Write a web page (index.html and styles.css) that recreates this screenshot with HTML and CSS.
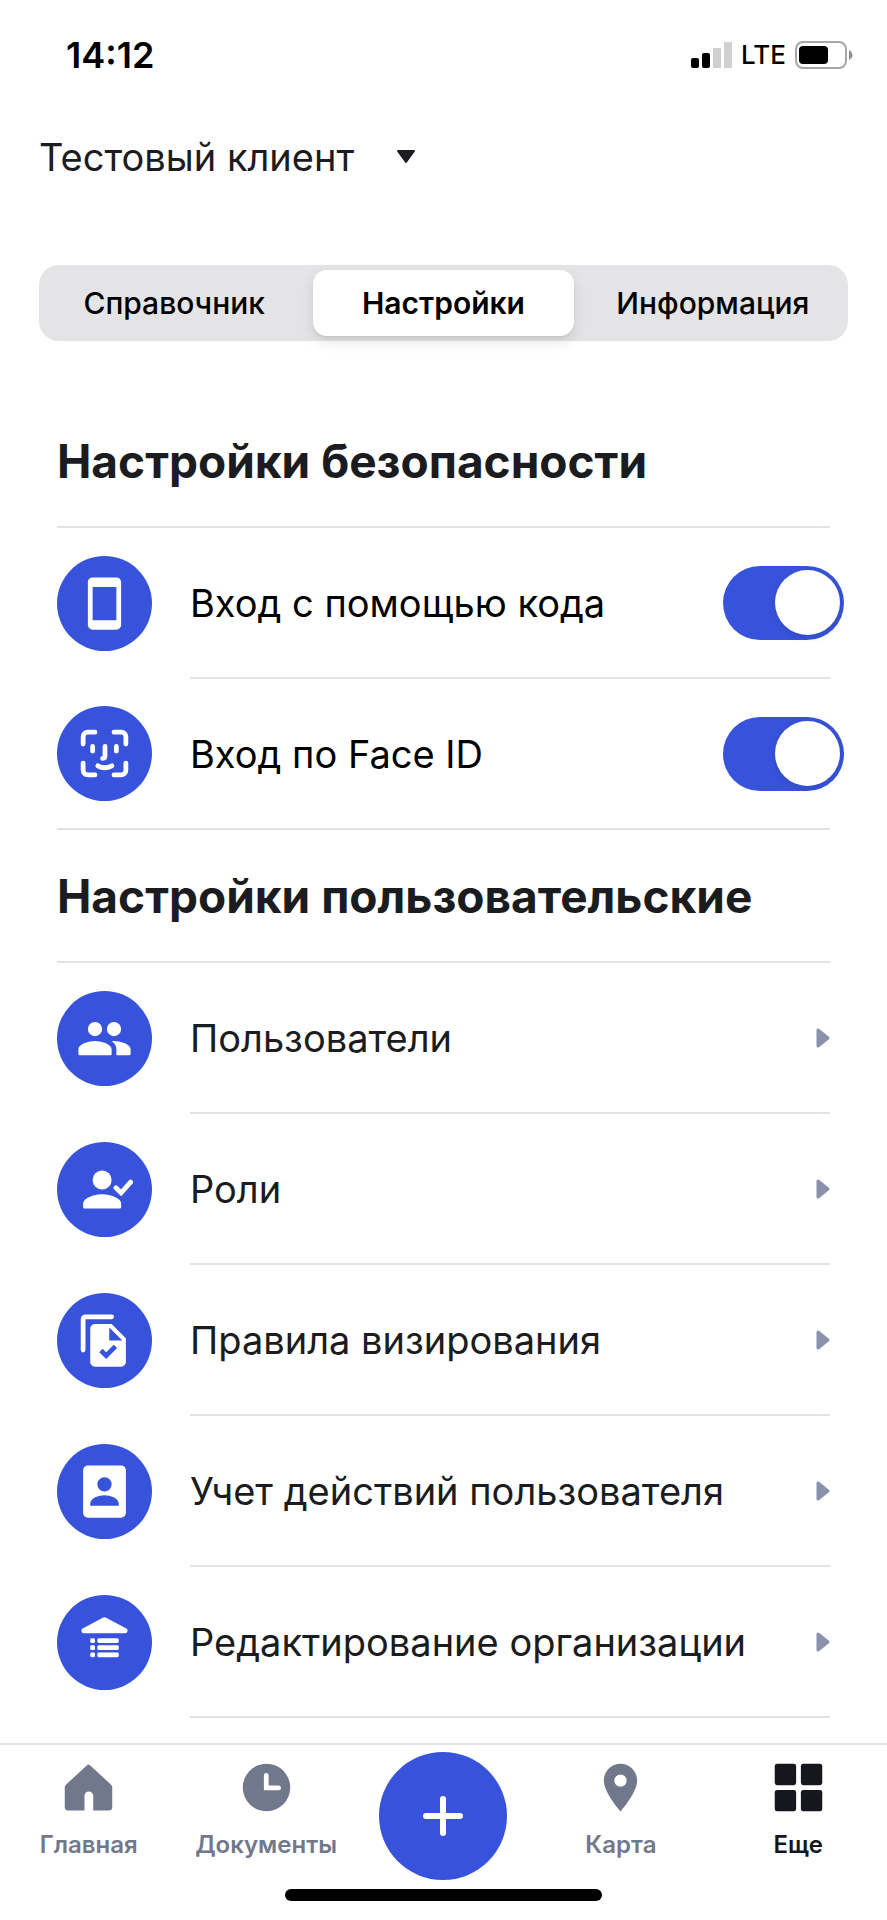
FILE: index.html
```html
<!DOCTYPE html>
<html lang="ru">
<head>
<meta charset="utf-8">
<meta name="viewport" content="width=device-width, initial-scale=1">
<title>Настройки</title>
<link rel="stylesheet" href="styles.css">
</head>
<body>
<div class="status">
  <time class="status-time">14:12</time>
  <div class="status-right">
    <svg class="signal" viewBox="0 0 41 26" aria-hidden="true">
      <rect x="0" y="16" width="8" height="10" rx="2"/><rect x="11" y="11" width="8" height="15" rx="2"/>
      <rect class="dim" x="22" y="6" width="8" height="20" rx="1"/><rect class="dim" x="33" y="0" width="8" height="26" rx="1"/>
    </svg>
    <span class="network">LTE</span>
    <svg class="battery" viewBox="0 0 58 28" aria-hidden="true">
      <rect class="shell" x="1" y="1" width="50" height="26" rx="7"/>
      <rect x="4" y="5" width="29" height="18" rx="4"/>
      <path class="tip" d="M54 9c2 1 3.500 3 3.500 5s-1.500 4-3.500 5z"/>
    </svg>
  </div>
</div>

<header class="client">
  <button class="client-button" type="button">Тестовый клиент
    <svg class="caret" viewBox="0 0 20 14" aria-hidden="true"><path d="M2 1h16L10 12z"/></svg>
  </button>
</header>

<nav class="tabs" aria-label="Разделы">
  <button class="tab" type="button">Справочник</button>
  <button class="tab tab-active" type="button" aria-current="page">Настройки</button>
  <button class="tab" type="button">Информация</button>
</nav>

<main class="content">
  <section>
    <h2 class="heading">Настройки безопасности</h2>
    <ul class="list list-closed">
      <li class="row">
        <span class="badge"><svg class="icon" viewBox="0 0 24 24" aria-hidden="true"><path fill-rule="evenodd" d="M7 1h10a2 2 0 0 1 2 2v18a2 2 0 0 1-2 2H7a2 2 0 0 1-2-2V3a2 2 0 0 1 2-2zM7 5v14h10V5z"/></svg></span>
        <label class="row-body" for="code"><span>Вход с помощью кода</span>
          <input class="switch" id="code" type="checkbox" role="switch" checked></label>
      </li>
      <li class="row">
        <span class="badge"><svg class="icon line" viewBox="0 0 24 24" aria-hidden="true"><path d="M3 8V5a2 2 0 0 1 2-2h3M16 3h3a2 2 0 0 1 2 2v3M21 16v3a2 2 0 0 1-2 2h-3M8 21H5a2 2 0 0 1-2-2v-3M7 9v2M17 9v2M12.200 9v4.200q0 .8-1 .9M9.200 17.200q2.800 1.600 5.900 0"/></svg></span>
        <label class="row-body" for="face"><span>Вход по Face ID</span>
          <input class="switch" id="face" type="checkbox" role="switch" checked></label>
      </li>
    </ul>
  </section>

  <section>
    <h2 class="heading">Настройки пользовательские</h2>
    <ul class="list">
      <li class="row">
        <span class="badge"><svg class="icon" viewBox="0 0 24 24" aria-hidden="true"><circle cx="8" cy="8" r="3"/><circle cx="16" cy="8" r="3"/><path d="M8 13c-2.330 0-7 1.170-7 3.500V18.500q0 .5.5.5h13q.5 0 .5-.5V16.500C15 14.170 10.330 13 8 13zM16 13c-.29 0-.62.02-.97.05 1.160.84 1.970 1.970 1.970 3.450V19h5.500q.5 0 .5-.5v-2c0-2.330-4.670-3.500-7-3.500z"/></svg></span>
        <a class="row-body" href="#users"><span>Пользователи</span><svg class="arrow" viewBox="0 0 14 20" aria-hidden="true"><path d="M2 2v16l10-8z"/></svg></a>
      </li>
      <li class="row">
        <span class="badge"><svg class="icon" viewBox="0 0 24 24" aria-hidden="true"><circle cx="11" cy="8" r="4"/><path d="M11 14c-2.670 0-8 1.340-8 4v1.500q0 .5.5.5h15q.5 0 .5-.5V18c0-2.660-5.330-4-8-4z"/><path class="tick" d="M16.800 11.300l2.200 2.100 4-4.500"/></svg></span>
        <a class="row-body" href="#roles"><span>Роли</span><svg class="arrow" viewBox="0 0 14 20" aria-hidden="true"><path d="M2 2v16l10-8z"/></svg></a>
      </li>
      <li class="row">
        <span class="badge"><svg class="icon" viewBox="0 0 24 24" aria-hidden="true"><path d="M16 2a1 1 0 0 0-1-1H4a2 2 0 0 0-2 2v13a1 1 0 0 0 2 0V3h11a1 1 0 0 0 1-1z"/><path fill-rule="evenodd" d="M8 5h7l6 6v10a2 2 0 0 1-2 2H8a2 2 0 0 1-2-2V7a2 2 0 0 1 2-2zM14 6.500V12h5.500z"/><path class="tick tick-blue" d="M10.500 16.200l2.200 2.200 3.900-3.900"/></svg></span>
        <a class="row-body" href="#rules"><span>Правила визирования</span><svg class="arrow" viewBox="0 0 14 20" aria-hidden="true"><path d="M2 2v16l10-8z"/></svg></a>
      </li>
      <li class="row">
        <span class="badge"><svg class="icon" viewBox="0 0 24 24" aria-hidden="true"><path fill-rule="evenodd" d="M5 1h14a2 2 0 0 1 2 2v18a2 2 0 0 1-2 2H5a2 2 0 0 1-2-2V3a2 2 0 0 1 2-2zM12 6a3 3 0 1 0 0 6 3 3 0 0 0 0-6zM12 13.600c-2.400 0-6 1.200-6 3.500V18h12v-.9c0-2.300-3.600-3.500-6-3.500z"/></svg></span>
        <a class="row-body" href="#audit"><span>Учет действий пользователя</span><svg class="arrow" viewBox="0 0 14 20" aria-hidden="true"><path d="M2 2v16l10-8z"/></svg></a>
      </li>
      <li class="row">
        <span class="badge"><svg class="icon" viewBox="0 0 24 24" aria-hidden="true"><path d="M11.500 1.500q.5-.2 1 0l8.700 4.600a.9.9 0 0 1 .5.9v.2a.9.9 0 0 1-.9.9H3.200a.9.9 0 0 1-.9-.9V7a.9.9 0 0 1 .5-.9z"/><rect x="6" y="10.200" width="2" height="2" rx=".6"/><rect x="9" y="10.200" width="9" height="2" rx=".6"/><rect x="6" y="13.200" width="2" height="2" rx=".6"/><rect x="9" y="13.200" width="9" height="2" rx=".6"/><rect x="6" y="16.200" width="2" height="2" rx=".6"/><rect x="9" y="16.200" width="9" height="2" rx=".6"/></svg></span>
        <a class="row-body" href="#organization"><span>Редактирование организации</span><svg class="arrow" viewBox="0 0 14 20" aria-hidden="true"><path d="M2 2v16l10-8z"/></svg></a>
      </li>
    </ul>
  </section>
</main>

<footer class="bottom">
  <nav class="bar" aria-label="Главное меню">
    <a class="bar-item" href="#home"><svg class="icon" viewBox="0 0 24 24" aria-hidden="true"><path d="M12.500 2.500l9 8.300a1.500 1.500 0 0 1 .5 1.100v8.300a1.500 1.500 0 0 1-1.500 1.500H14v-6.200a1.850 1.850 0 0 0-3.700 0v6.200H3.500A1.500 1.500 0 0 1 2 20.200v-8.300a1.500 1.500 0 0 1 .5-1.100l9-8.300q.5-.4 1 0z"/></svg>Главная</a>
    <a class="bar-item" href="#documents"><svg class="icon" viewBox="0 0 24 24" aria-hidden="true"><circle cx="12" cy="12" r="10"/><path class="hands" d="M11.900 6.900v5.300h5.200"/></svg>Документы</a>
    <button class="add" type="button" aria-label="Добавить"><svg class="plus" viewBox="0 0 40 40" aria-hidden="true"><path d="M20 3v34M3 20h34"/></svg></button>
    <a class="bar-item" href="#map"><svg class="icon" viewBox="0 0 24 24" aria-hidden="true"><path fill-rule="evenodd" d="M12 2C8.130 2 5 5.130 5 9c0 5.250 7 13 7 13s7-7.750 7-13c0-3.870-3.130-7-7-7zM12 6.500a2.600 2.600 0 1 0 0 5.200 2.600 2.600 0 0 0 0-5.200z"/></svg>Карта</a>
    <a class="bar-item bar-item-active" href="#more" aria-current="page"><svg class="icon" viewBox="0 0 24 24" aria-hidden="true"><rect x="2" y="2" width="9" height="9" rx="1"/><rect x="13" y="2" width="9" height="9" rx="1"/><rect x="2" y="13" width="9" height="9" rx="1"/><rect x="13" y="13" width="9" height="9" rx="1"/></svg>Еще</a>
  </nav>
  <div class="home-indicator"></div>
</footer>
</body>
</html>
```
FILE: styles.css
```css
:root {
  --blue: #3853db;
  --ink: #1b1c20;
  --line: #e1e1e8;
  --muted: #71788b;
}

* { box-sizing: border-box; }

body {
  margin: 0;
  min-height: 100vh;
  display: flex;
  flex-direction: column;
  background: #fff;
  color: var(--ink);
  font-family: Inter, "Liberation Sans", sans-serif;
  font-size: 38px;
  line-height: 48px;
}

button { border: 0; padding: 0; background: none; color: inherit; font: inherit; }
a { color: inherit; text-decoration: none; }

.icon { width: 57px; height: 57px; fill: currentColor; }

/* Status bar */
.status {
  display: flex;
  align-items: center;
  justify-content: space-between;
  height: 110px;
  padding: 0 34px 0 66px;
  color: #000;
}
.status-time { font-size: 36px; font-weight: 600; }
.status-right { display: flex; align-items: center; gap: 9px; }
.network { font-size: 26px; font-weight: 500; }
.signal { width: 41px; height: 26px; }
.signal .dim { fill: #d0d0d0; }
.battery { width: 58px; height: 28px; }
.battery .shell { fill: none; stroke: #a6a6a6; stroke-width: 2; }
.battery .tip { fill: #8e8e8e; }

/* Client selector */
.client { padding: 23px 39px 0; }
.client-button { display: flex; align-items: center; gap: 42px; }
.caret { width: 20px; height: 14px; fill: var(--ink); stroke: var(--ink); stroke-width: 2; stroke-linejoin: round; }

/* Segmented tabs */
.tabs {
  display: grid;
  grid-template-columns: repeat(3, 1fr);
  gap: 9px;
  margin: 84px 39px 0;
  padding: 5px;
  border-radius: 20px;
  background: #e4e4e6;
}
.tab {
  height: 66px;
  border-radius: 14px;
  color: #000;
  font-size: 30px;
  font-weight: 500;
}
.tab-active {
  background: #fff;
  font-weight: 600;
  box-shadow: 0 6px 14px rgba(0, 0, 0, .1), 0 2px 3px rgba(0, 0, 0, .06);
}

/* Settings */
.content { flex: 1; padding: 54px 57px 25px; }
.heading {
  display: flex;
  align-items: center;
  height: 133px;
  margin: 0;
  border-bottom: 2px solid var(--line);
  font-size: 46px;
  font-weight: 700;
}
.list { margin: 0; padding: 0; list-style: none; }
.row { display: flex; align-items: center; gap: 38px; height: 151px; }
.badge {
  display: flex;
  align-items: center;
  justify-content: center;
  width: 95px;
  height: 95px;
  border-radius: 50%;
  background: var(--blue);
  color: #fff;
}
.line { fill: none; stroke: currentColor; stroke-width: 2; stroke-linecap: round; stroke-linejoin: round; }
.tick { fill: none; stroke: currentColor; stroke-width: 2; stroke-linecap: round; }
.tick-blue { stroke: var(--blue); stroke-linecap: butt; }
.row-body {
  display: flex;
  flex: 1;
  align-items: center;
  justify-content: space-between;
  height: 100%;
  border-bottom: 2px solid var(--line);
}
.list-closed { color: #000; }
.list-closed .row:last-child { border-bottom: 2px solid var(--line); }
.list-closed .row:last-child .row-body { border-bottom: 0; }
.arrow { width: 14px; height: 20px; fill: #8a92ab; stroke: #8a92ab; stroke-width: 3; stroke-linejoin: round; }

.switch {
  appearance: none;
  display: flex;
  align-items: center;
  width: 121px;
  height: 74px;
  margin: 0 -14px 0 0;
  padding: 0 4px;
  border-radius: 37px;
  background: #d5d7de;
}
.switch::before {
  content: "";
  width: 65px;
  height: 65px;
  border-radius: 50%;
  background: #fff;
  box-shadow: 0 2px 8px rgba(0, 0, 0, .12);
}
.switch:checked { justify-content: flex-end; background: var(--blue); }

/* Bottom bar */
.bottom { border-top: 2px solid var(--line); }
.bar { display: grid; grid-template-columns: repeat(5, 1fr); justify-items: center; height: 144px; padding-top: 7px; }
.bar-item {
  display: flex;
  flex-direction: column;
  align-items: center;
  gap: 13px;
  padding-top: 7px;
  color: var(--muted);
  font-size: 24px;
  font-weight: 600;
  line-height: 32px;
}
.bar-item-active { color: #16171c; }
.hands { fill: none; stroke: #fff; stroke-width: 2; stroke-linecap: round; }
.add {
  display: flex;
  align-items: center;
  justify-content: center;
  width: 128px;
  height: 128px;
  border-radius: 50%;
  background: var(--blue);
}
.plus { width: 40px; height: 40px; fill: none; stroke: #fff; stroke-width: 6; stroke-linecap: round; }
.home-indicator { width: 317px; height: 12px; margin: 0 auto 19px; border-radius: 6px; background: #000; }
```
